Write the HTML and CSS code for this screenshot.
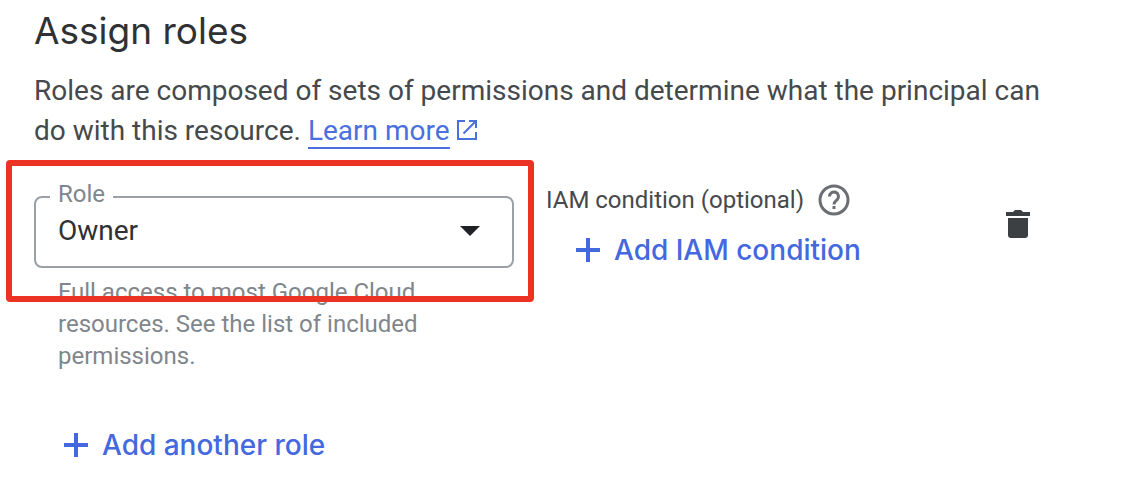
FILE: index.html
```html
<!DOCTYPE html>
<html lang="en">
  <head>
    <meta charset="utf-8" />
    <meta name="viewport" content="width=device-width, initial-scale=1.0" />
    <title>Assign roles</title>
    <link rel="stylesheet" href="styles.css">
  </head>
  <body>
    <main>
      <h1>Assign roles</h1>
      <p class="intro">
        Roles are composed of sets of permissions and determine what the principal can
        do with this resource.
        <a href="#learn-more">Learn more</a><svg class="intro__svg--external" viewBox="0 0 20 20" aria-hidden="true">
          <path d="M8 1H1v18h18v-7M12 1h7v7M18.500 1.500L6.500 13.500" />
        </svg>
      </p>
      <div class="role-row">
        <div class="role">
          <div class="role__highlight">
            <div class="field">
              <label for="role">Role</label>
              <select id="role" aria-describedby="role-hint">
                <option>Owner</option>
              </select>
              <svg class="field__svg--arrow" viewBox="0 0 20 10" aria-hidden="true">
                <path d="M0 0h20L10 10z" />
              </svg>
            </div>
          </div>
          <p class="role__hint" id="role-hint">Full access to most Google Cloud resources. See the list of included permissions.</p>
        </div>
        <div class="condition">
          <div class="condition__title">
            <span>IAM condition (optional)</span>
            <button class="button--icon" type="button" aria-label="Help">
              <svg class="svg--help" viewBox="0 0 32 32" aria-hidden="true">
                <circle cx="16" cy="16" r="14" />
                <path d="M11.500 12.500a4.500 4.500 0 1 1 7.700 3.100C17.500 17.200 16 18 16 20.500" />
                <path d="M16 22v3" />
              </svg>
            </button>
          </div>
          <button class="button--add" type="button">
            <svg class="svg--plus" viewBox="0 0 24 24" aria-hidden="true">
              <path d="M12 0v24M0 12h24" />
            </svg>
            Add IAM condition
          </button>
        </div>
        <button class="button--icon button--delete" type="button" aria-label="Delete role">
          <svg class="svg--trash" viewBox="0 0 24 28" aria-hidden="true">
            <path d="M0 2h7l2-2h6l2 2h7v4H0zM2 8h20v17q0 3-3 3H5q-3 0-3-3z" />
          </svg>
        </button>
      </div>
      <button class="button--add button--add-role" type="button">
        <svg class="svg--plus" viewBox="0 0 24 24" aria-hidden="true">
          <path d="M12 0v24M0 12h24" />
        </svg>
        Add another role
      </button>
    </main>
  </body>
</html>
```

FILE: styles.css
```css
* {
  box-sizing: border-box;
}
body {
  margin: 0;
  font-family: Roboto, sans-serif;
  font-size: 28px;
  line-height: 40px;
  color: #46494c;
  background-color: #fff;
}
main {
  padding: 11px 72px 24px 34px;
}
h1,
p {
  margin: 0;
}
h1 {
  font-family: Inter, sans-serif;
  font-size: 37px;
  font-weight: 400;
  line-height: 40px;
  color: #303134;
}
.intro {
  margin-top: 20px;
}
a {
  border-bottom: 2px solid currentColor;
  color: #4a6fdf;
  text-decoration: none;
}
.intro__svg--external {
  width: 20px;
  height: 20px;
  margin-left: 7px;
  fill: none;
  stroke: #4a6fdf;
  stroke-width: 2;
}
.role-row {
  display: flex;
  margin-top: 45px;
}
.role {
  flex: 0 1 480px;
}
.role__highlight {
  position: relative;
}
.role__highlight::after {
  content: "";
  position: absolute;
  inset: -36px -20px -34px -28px;
  border: 6px solid #ec3323;
  border-radius: 4px;
  pointer-events: none;
}
.field {
  position: relative;
}
.field label {
  position: absolute;
  top: -18px;
  left: 16px;
  padding: 0 8px;
  font-size: 24px;
  line-height: 32px;
  color: #80868b;
  background-color: #fff;
}
.field select {
  display: block;
  width: 100%;
  height: 72px;
  padding: 0 56px 2px 22px;
  appearance: none;
  border: 2px solid #9aa0a6;
  border-radius: 8px;
  font: inherit;
  color: #303134;
  background-color: #fff;
}
.field__svg--arrow {
  position: absolute;
  top: 30px;
  right: 34px;
  width: 20px;
  height: 10px;
  fill: #202124;
  pointer-events: none;
}
.role__hint {
  padding: 8px 72px 0 24px;
  font-size: 24px;
  line-height: 32px;
  color: #80868b;
}
.condition {
  margin-left: 32px;
}
.condition__title {
  display: flex;
  align-items: center;
  gap: 14px;
  margin-top: -12px;
  font-size: 24px;
  line-height: 32px;
}
button {
  padding: 0;
  border: 0;
  font: inherit;
  background: none;
  cursor: pointer;
}
.button--icon {
  display: flex;
  color: #6b6f73;
}
.button--add {
  display: flex;
  align-items: center;
  gap: 14px;
  font-family: Inter, sans-serif;
  font-size: 28px;
  font-weight: 500;
  line-height: 32px;
  color: #4468dd;
}
.condition .button--add {
  margin: 18px 0 0 30px;
}
.button--add-role {
  margin: 57px 0 0 30px;
}
.button--delete {
  align-self: flex-start;
  margin: 14px 20px 0 auto;
  color: #3c4043;
}
.svg--help {
  width: 32px;
  height: 32px;
  fill: none;
  stroke: currentColor;
  stroke-width: 3;
}
.svg--plus {
  width: 24px;
  height: 24px;
  fill: none;
  stroke: currentColor;
  stroke-width: 4;
}
.svg--trash {
  width: 24px;
  height: 28px;
  fill: currentColor;
}
```
